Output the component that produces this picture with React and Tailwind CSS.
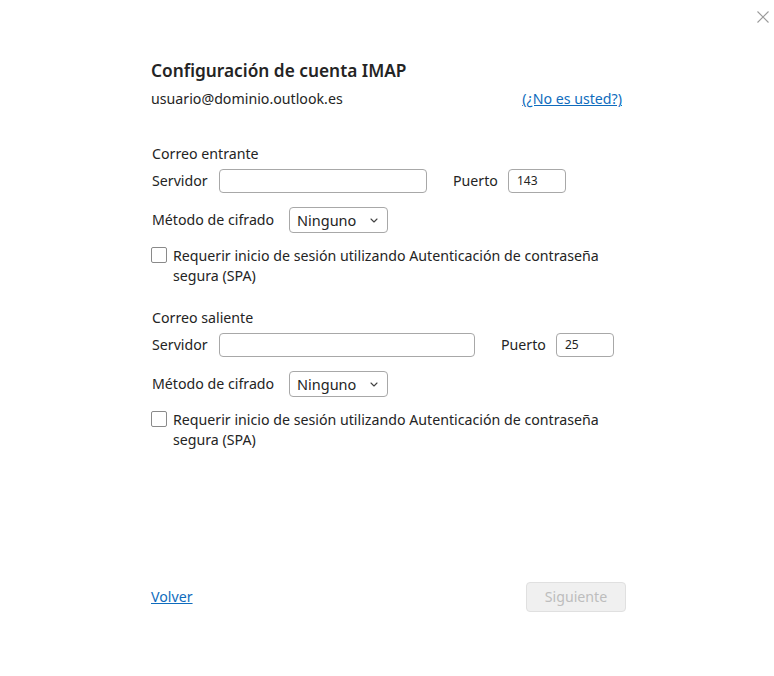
import React from "react";

const font = { fontFamily: '"Noto Sans", "Open Sans", sans-serif' };

function Chevron() {
  return (
    <svg width="8" height="5" viewBox="0 0 8 5" className="ml-auto">
      <path d="M1 1 L4 4 L7 1" fill="none" stroke="#424242" strokeWidth="1.1" strokeLinecap="round" strokeLinejoin="round" />
    </svg>
  );
}

function ServerRow({ inputW, port }) {
  return (
    <div className="flex items-center h-[24px] mt-[5px]">
      <span className="w-[67px]">Servidor</span>
      <div className={`h-[24px] rounded-[4px] border border-[#a8a8a8] ${inputW}`} />
      <span className="ml-[26px] w-[55px]">Puerto</span>
      <div className="h-[24px] w-[58px] rounded-[4px] border border-[#a8a8a8] flex items-center pl-[8px] text-[12px] text-[#242424]">
        {port}
      </div>
    </div>
  );
}

function MethodRow() {
  return (
    <div className="flex items-center mt-[14px] h-[26px]">
      <span className="w-[137px]">Método de cifrado</span>
      <div className="h-[26px] w-[99px] rounded-[4px] border border-[#a8a8a8] flex items-center pl-[7px] pr-[9px]">
        <span className="text-[14.5px]">Ninguno</span>
        <Chevron />
      </div>
    </div>
  );
}

function CheckRow() {
  return (
    <div className="flex items-start mt-[13px]">
      <div className="w-[16px] h-[16px] mt-[1px] rounded-[2px] border border-[#8a8a8a] shrink-0" />
      <div className="ml-[6px] leading-[20px]">
        Requerir inicio de sesión utilizando Autenticación de contraseña
        <br />
        segura (SPA)
      </div>
    </div>
  );
}

export default function App() {
  return (
    <div className="relative w-[774px] h-[676px] bg-white text-[#242424] text-[14.2px] leading-[20px]" style={font}>
      <button className="absolute top-[11px] right-[5px] w-[12px] h-[12px]">
        <svg width="12" height="12" viewBox="0 0 12 12">
          <path d="M0.5 0.5 L11.5 11.5 M11.5 0.5 L0.5 11.5" stroke="#9a9a9a" strokeWidth="1.1" />
        </svg>
      </button>
      <div className="flex flex-col w-[475px] ml-[151px] pt-[59px]">
        <h1 className="text-[17.3px] leading-[24px] font-semibold">Configuración de cuenta IMAP</h1>
        <div className="flex justify-between mt-[6px] h-[20px]">
          <span>usuario@dominio.outlook.es</span>
          <a className="text-[#0f6cbd] underline mr-[4px]">(¿No es usted?)</a>
        </div>

        <div className="mt-[35px] ml-[1px] h-[20px]">Correo entrante</div>
        <div className="ml-[1px]">
          <ServerRow inputW="w-[208px]" port="143" />
          <MethodRow />
        </div>
        <CheckRow />

        <div className="mt-[22px] ml-[1px] h-[20px]">Correo saliente</div>
        <div className="ml-[1px]">
          <ServerRow inputW="w-[256px]" port="25" />
          <MethodRow />
        </div>
        <CheckRow />

        <div className="flex items-center justify-between mt-[132px]">
          <a className="text-[#0f6cbd] underline">Volver</a>
          <div className="w-[100px] h-[30px] rounded-[4px] border border-[#e0e0e0] bg-[#f0f0f0] text-[#bdbdbd] flex items-center justify-center">
            Siguiente
          </div>
        </div>
      </div>
    </div>
  );
}
